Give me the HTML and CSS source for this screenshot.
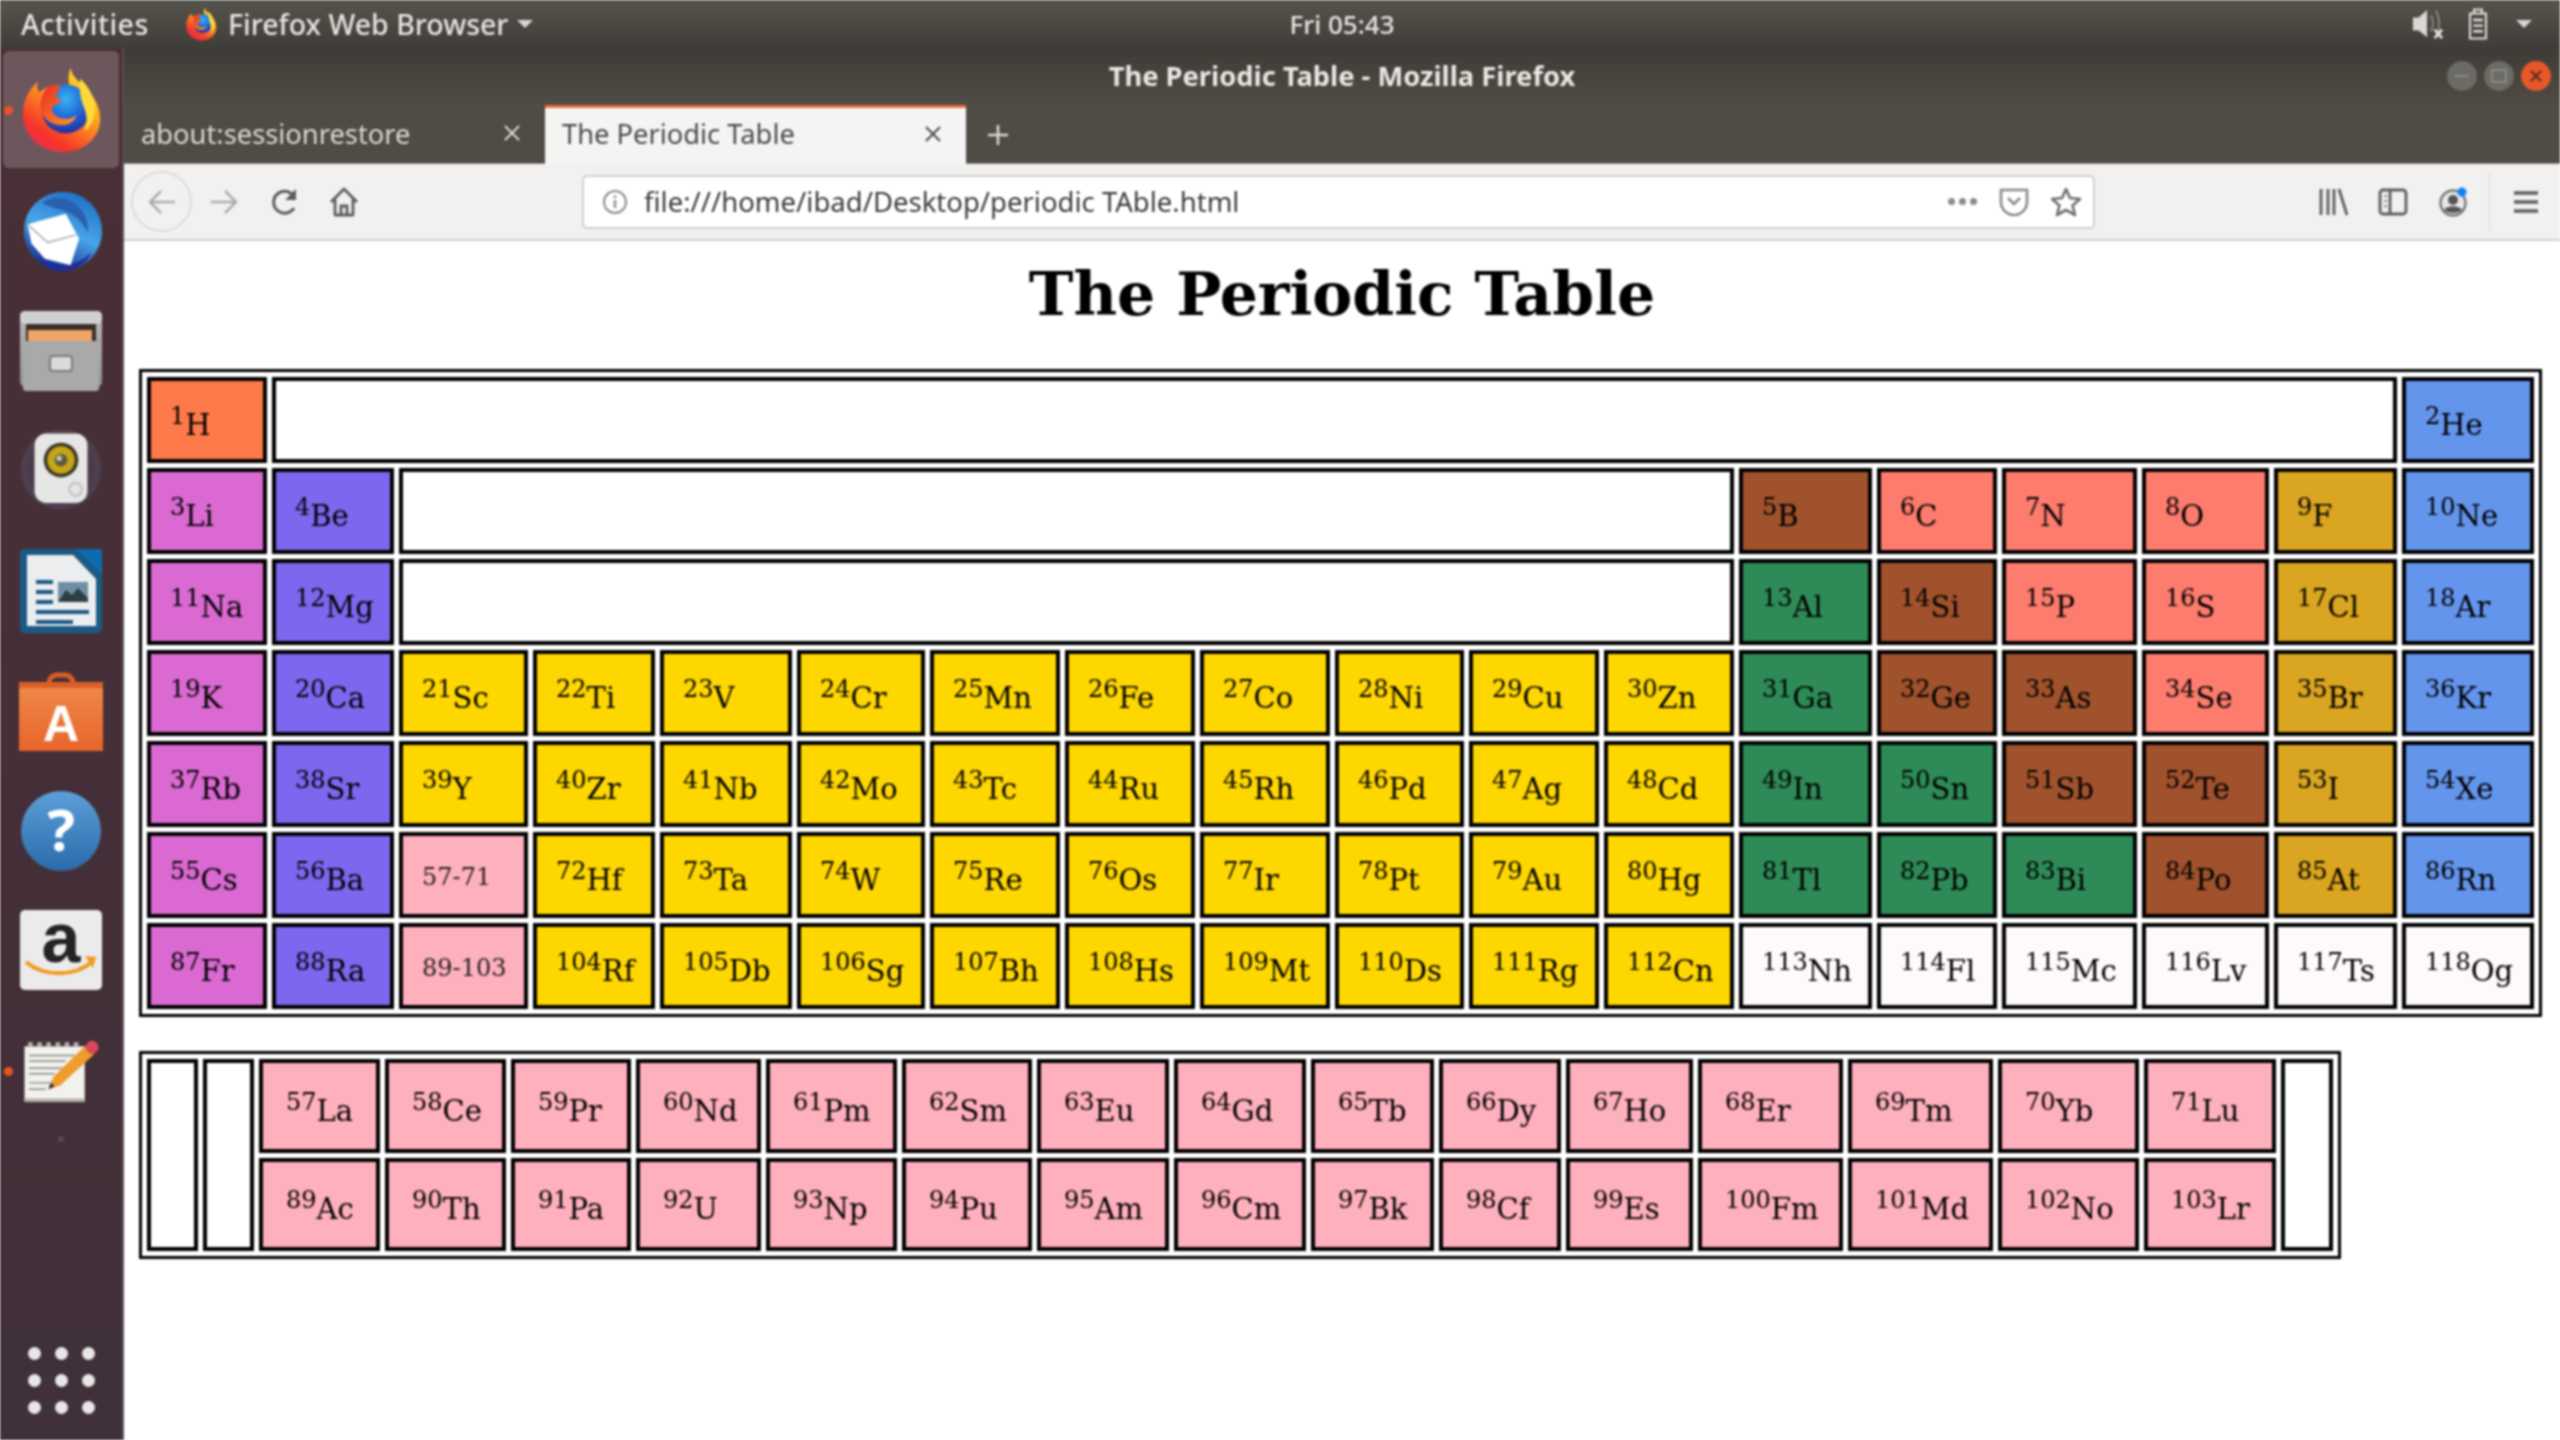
FILE: index.html
```html
<!DOCTYPE html>
<html lang="en">
<head>
<meta charset="utf-8">
<title>The Periodic Table</title>
<link rel="stylesheet" href="styles.css">
</head>
<body>
<svg class="defs" width="0" height="0" aria-hidden="true">
  <defs>
    <linearGradient id="ffFlame" x1="0.85" y1="0" x2="0.2" y2="1">
      <stop offset="0" stop-color="#ffe62b"/><stop offset="0.4" stop-color="#ffa21d"/><stop offset="0.8" stop-color="#f6352a"/><stop offset="1" stop-color="#ee2a55"/>
    </linearGradient>
    <linearGradient id="ffFox" x1="0" y1="0" x2="1" y2="1">
      <stop offset="0" stop-color="#e9282c"/><stop offset="1" stop-color="#ff9a1c"/>
    </linearGradient>
    <radialGradient id="ffGlobe" cx="0.5" cy="0.3" r="0.8">
      <stop offset="0" stop-color="#35b4f0"/><stop offset="0.5" stop-color="#1f62d8"/><stop offset="1" stop-color="#2a1d8c"/>
    </radialGradient>
    <symbol id="firefox" viewBox="0 0 84 88">
      <path fill="url(#ffFlame)" d="M52 1c1 9 8 13 15 20 11 11 16 23 15 35-2 19-19 31-38 31C22 87 3 71 3 48 3 36 8 24 18 15c-1 5 0 9 2 11 5-5 11-7 18-7 5 0 10 1 14 4C49 16 49 8 52 1z"/>
      <circle cx="47" cy="43" r="25" fill="url(#ffGlobe)"/>
      <path fill="url(#ffFox)" d="M30 19c5-2 9 0 12 3-3 3-6 6-5 9l6 3c-2 3-6 3-9 6-3 4 0 9 6 12 6 2 13 1 18-3-2 8-11 12-20 10-11-2-18-11-17-21 1-8 4-15 9-19z"/>
      <path fill="#ffd83a" d="M62 12c9 9 16 21 15 34-1 9-5 15-11 20 3-8 3-17-1-26-3-8-5-18-3-28z"/>
    </symbol>
    <linearGradient id="tbBlue" x1="0.7" y1="0" x2="0.3" y2="1">
      <stop offset="0" stop-color="#1d6fc4"/><stop offset="0.5" stop-color="#49a4e8"/><stop offset="1" stop-color="#152a8a"/>
    </linearGradient>
    <linearGradient id="drawer" x1="0" y1="0" x2="0" y2="1">
      <stop offset="0" stop-color="#b9b9b9"/><stop offset="1" stop-color="#8f8f8f"/>
    </linearGradient>
    <linearGradient id="bag" x1="0" y1="0" x2="0" y2="1">
      <stop offset="0" stop-color="#f08a4c"/><stop offset="1" stop-color="#e8652a"/>
    </linearGradient>
    <linearGradient id="help" x1="0" y1="0" x2="0" y2="1">
      <stop offset="0" stop-color="#5c9fd8"/><stop offset="1" stop-color="#2a6bab"/>
    </linearGradient>
  </defs>
</svg>
<div class="screen">
  <header class="topbar">
    <div class="topbar-left">
      <span class="activities">Activities</span>
      <svg class="app-icon"><use href="#firefox"/></svg>
      <span class="app-name">Firefox Web Browser</span>
      <span class="arrow"></span>
    </div>
    <div class="clock">Fri 05:43</div>
    <div class="tray">
      <svg class="tray-sound" viewBox="0 0 34 40">
        <path fill="#d8d7d3" d="M1 13h6l9-8v29l-9-7H1z"/>
        <path fill="none" stroke="#8c8a84" stroke-width="2" d="M20 11c3 5 3 12 0 17M25 6c5 7 5 20 0 28"/>
        <path fill="none" stroke="#e4e3df" stroke-width="3" d="M24 26l8 9m0-9l-8 9"/>
      </svg>
      <svg class="tray-batt" viewBox="0 0 24 40">
        <path fill="none" stroke="#e2e1dd" stroke-width="2.5" d="M2 7h20v31H2zM7 7V2h10v5"/>
        <path stroke="#e2e1dd" stroke-width="3" d="M6 15h12M6 22h12M6 29h12"/>
      </svg>
      <span class="arrow arrow-tray"></span>
    </div>
  </header>
  <div class="desktop">
    <nav class="dock">
      <div class="dock-item is-active"><span class="pip"></span><svg class="dock-icon ff"><use href="#firefox"/></svg></div>
      <div class="dock-item">
        <svg class="dock-icon" viewBox="0 0 88 84">
          <circle cx="46" cy="42" r="41" fill="url(#tbBlue)"/>
          <path fill="#1b2f9a" d="M20 68c14 12 40 14 56-4-6 14-20 20-32 20s-20-6-24-16z"/>
          <path fill="#2a5fb0" d="M24 12c12-8 28-6 38 4 8 8 11 18 10 28-4-10-12-18-22-22-9-4-18-4-26-10z"/>
          <path fill="#fff" d="M9 35l40-11 14 26-9 28-27-7-14-16z"/>
          <path fill="none" stroke="#9aa6b5" stroke-width="1.5" d="M10 36l20 18 30-8"/>
        </svg>
      </div>
      <div class="dock-item">
        <svg class="dock-icon" viewBox="0 0 84 84">
          <rect x="1" y="2" width="82" height="76" rx="5" fill="url(#drawer)"/>
          <rect x="1" y="2" width="82" height="13" rx="5" fill="#d0d0d0"/>
          <rect x="7" y="15" width="70" height="17" fill="#3a2d28"/>
          <rect x="9" y="21" width="64" height="11" fill="#eda467"/>
          <path fill="#a9a9a9" d="M4 32h76v47a3 3 0 0 1-3 3H7a3 3 0 0 1-3-3z"/>
          <rect x="31" y="47" width="22" height="15" rx="3" fill="#dadada" stroke="#7b7b7b" stroke-width="2"/>
        </svg>
      </div>
      <div class="dock-item">
        <svg class="dock-icon" viewBox="0 0 92 84">
          <circle cx="46" cy="40" r="44" fill="#4d3f4f"/>
          <circle cx="46" cy="40" r="36" fill="#4b3a47"/>
          <rect x="17" y="1" width="58" height="76" rx="13" fill="#e6e6e4"/>
          <circle cx="46" cy="30" r="19" fill="#3d3a2a"/>
          <circle cx="46" cy="30" r="15" fill="#c4a517"/>
          <circle cx="46" cy="30" r="7" fill="#5e5a3e"/>
          <circle cx="44" cy="28" r="3" fill="#c7c7c0"/>
          <circle cx="62" cy="62" r="7" fill="none" stroke="#c8c8c8" stroke-width="3"/>
        </svg>
      </div>
      <div class="dock-item">
        <svg class="dock-icon" viewBox="0 0 84 84">
          <rect x="1" y="0" width="82" height="84" rx="5" fill="#1b5a87"/>
          <path fill="#0c6cb0" d="M58 0h22a3 3 0 0 1 3 3v22z"/>
          <path fill="#ecedee" d="M8 6h46l23 24v47H8z"/>
          <path stroke="#1b5a87" stroke-width="4" d="M17 33h17M17 43h17M17 53h17M17 63h53M17 73h37"/>
          <rect x="39" y="33" width="30" height="20" fill="#6f8fa6"/>
          <path fill="#2f3e46" d="M39 53l8-12 6 5 6-7 10 10v4z"/>
        </svg>
      </div>
      <div class="dock-item">
        <svg class="dock-icon" viewBox="0 0 84 84">
          <path fill="none" stroke="#d85e26" stroke-width="5" d="M30 24v-10a8 8 0 0 1 8-8h8a8 8 0 0 1 8 8v10"/>
          <path fill="url(#bag)" d="M0 13h84v69H0z"/>
          <path fill="#d9602a" d="M0 13h84v6H0z"/>
          <text class="bag-letter" x="42" y="72" text-anchor="middle">A</text>
        </svg>
      </div>
      <div class="dock-item">
        <svg class="dock-icon" viewBox="0 0 84 84">
          <circle cx="42" cy="42" r="40" fill="url(#help)"/>
          <text class="help-mark" x="42" y="62" text-anchor="middle">?</text>
        </svg>
      </div>
      <div class="dock-item">
        <svg class="dock-icon" viewBox="0 0 84 84">
          <rect x="1" y="1" width="82" height="80" rx="5" fill="#ebebeb"/>
          <text class="amazon-a" x="42" y="53" text-anchor="middle">a</text>
          <path fill="none" stroke="#f09a1e" stroke-width="4" d="M7 53c18 15 48 15 66 0"/>
          <path fill="#f09a1e" d="M66 47l11 1-3 11z"/>
        </svg>
      </div>
      <div class="dock-item">
        <span class="pip"></span>
        <svg class="dock-icon" viewBox="0 0 92 70">
          <rect x="6" y="8" width="66" height="60" fill="#f1f1ee"/>
          <rect x="6" y="65" width="66" height="4" fill="#b4b4b0"/>
          <path stroke="#b5b5b0" stroke-width="5" stroke-dasharray="5 5" d="M10 6h60"/>
          <path stroke="#87867f" stroke-width="1.5" d="M11 18h50M11 24h40M11 32h42M11 38h28M11 48h28M11 55h18"/>
          <path fill="#ee9c2c" d="M72 8l10 9-37 34-13 4 6-14z"/>
          <path fill="#2b2623" d="M32 55l3-7 4 4z"/>
          <circle cx="80" cy="9" r="7" fill="#d8485a"/>
        </svg>
      </div>
      <span class="dock-faint"></span>
      <div class="apps-grid">
        <span></span><span></span><span></span><span></span><span></span><span></span><span></span><span></span><span></span>
      </div>
    </nav>
    <div class="window">
      <div class="titlebar">
        <div class="title">The Periodic Table - Mozilla Firefox</div>
        <div class="winbtns">
          <span class="winbtn"><svg viewBox="0 0 30 30"><path stroke="#8a8a86" stroke-width="2" d="M8 15h14"/></svg></span>
          <span class="winbtn"><svg viewBox="0 0 30 30"><rect x="8" y="9" width="14" height="12" fill="none" stroke="#8a8a86" stroke-width="2"/></svg></span>
          <span class="winbtn is-close"><svg viewBox="0 0 30 30"><path stroke="#5b2a18" stroke-width="2" d="M10 10l10 10m0-10L10 20"/></svg></span>
        </div>
      </div>
      <div class="tabstrip">
        <div class="tab">
          <span class="tab-label">about:sessionrestore</span>
          <svg class="tab-close" viewBox="0 0 20 20"><path stroke="currentColor" stroke-width="2" d="M3 3l14 14m0-14L3 17"/></svg>
        </div>
        <div class="tab is-current">
          <span class="tab-label">The Periodic Table</span>
          <svg class="tab-close" viewBox="0 0 20 20"><path stroke="currentColor" stroke-width="2" d="M3 3l14 14m0-14L3 17"/></svg>
        </div>
        <svg class="tab-new" viewBox="0 0 24 24"><path stroke="#dcdbd6" stroke-width="2.5" d="M12 2v20M2 12h20"/></svg>
      </div>
      <div class="toolbar">
        <span class="back-btn">
          <svg class="tb-icon" viewBox="0 0 30 30"><path fill="none" stroke="#aeaeae" stroke-width="2.6" d="M28 15H4M14 4L3 15l11 11"/></svg>
        </span>
        <svg class="tb-icon tb-forward" viewBox="0 0 30 30"><path fill="none" stroke="#aeaeae" stroke-width="2.6" d="M2 15h24M16 4l11 11-11 11"/></svg>
        <svg class="tb-icon tb-reload" viewBox="0 0 30 30"><path fill="none" stroke="#5d5d5d" stroke-width="3" d="M24 21a11 11 0 1 1-1-13"/><path fill="#5d5d5d" d="M26 2v11H15z"/></svg>
        <svg class="tb-icon tb-home" viewBox="0 0 30 30"><path fill="none" stroke="#5d5d5d" stroke-width="2.8" stroke-linejoin="round" d="M2 15L15 2l13 13M6 12v16h18V12M12 28v-9h6v9"/></svg>
        <div class="urlbar">
          <svg class="url-info" viewBox="0 0 26 26"><circle cx="13" cy="13" r="11" fill="none" stroke="#8d8d8d" stroke-width="2"/><path stroke="#8d8d8d" stroke-width="2.4" d="M13 11v8M13 6.500v2.500"/></svg>
          <span class="url-text">file:///home/ibad/Desktop/periodic TAble.html</span>
          <span class="url-dots"><i></i><i></i><i></i></span>
          <svg class="tb-icon url-pocket" viewBox="0 0 30 30"><path fill="none" stroke="#8a8a8a" stroke-width="2.6" d="M2 3h26v12a13 13 0 0 1-26 0z"/><path fill="none" stroke="#8a8a8a" stroke-width="2.6" d="M9 11l6 6 6-6"/></svg>
          <svg class="tb-icon url-star" viewBox="0 0 30 30"><path fill="none" stroke="#707070" stroke-width="2.6" stroke-linejoin="round" d="M15 2l4 9 10 1-7.500 6.500L24 28l-9-5-9 5 2.500-9.500L1 12l10-1z"/></svg>
        </div>
        <div class="tb-right">
          <svg class="tb-icon" viewBox="0 0 30 30"><path fill="none" stroke="#5d5d5d" stroke-width="2.8" d="M3 2v26M10 2v26M16 2v26M21 2l8 26"/></svg>
          <svg class="tb-icon" viewBox="0 0 30 30"><rect x="2" y="3" width="26" height="24" rx="3" fill="none" stroke="#5d5d5d" stroke-width="2.8"/><path stroke="#5d5d5d" stroke-width="2.8" d="M12 3v24"/><path stroke="#8d8d8d" stroke-width="2" d="M6 9h3M6 14h3M6 19h3"/></svg>
          <svg class="tb-icon" viewBox="0 0 30 30"><circle cx="15" cy="16" r="12.500" fill="#e8e8e8" stroke="#777" stroke-width="2.4"/><circle cx="15" cy="13" r="5" fill="#555"/><path fill="#555" d="M6 23c3-5 15-5 18 0-4 4-14 4-18 0z"/><circle cx="24" cy="5" r="4.500" fill="#0a84ff"/></svg>
          <span class="tb-sep"></span>
          <svg class="tb-icon" viewBox="0 0 30 30"><path stroke="#5d5d5d" stroke-width="3.400" d="M3 6h24M3 15h24M3 24h24"/></svg>
        </div>
      </div>
      <main class="page">
        <h1 class="page-title">The Periodic Table</h1>
        <table class="ptable ptable-main">
          <colgroup><col><col><col><col><col><col><col><col><col><col><col><col><col><col><col><col><col><col></colgroup>
          <tbody>
            <tr><td class="h"><sup>1</sup>H</td><td colspan="16" class="blank"></td><td class="ng"><sup>2</sup>He</td></tr>
            <tr><td class="am"><sup>3</sup>Li</td><td class="ae"><sup>4</sup>Be</td><td colspan="10" class="blank"></td><td class="md"><sup>5</sup>B</td><td class="nm"><sup>6</sup>C</td><td class="nm"><sup>7</sup>N</td><td class="nm"><sup>8</sup>O</td><td class="hl"><sup>9</sup>F</td><td class="ng"><sup>10</sup>Ne</td></tr>
            <tr><td class="am"><sup>11</sup>Na</td><td class="ae"><sup>12</sup>Mg</td><td colspan="10" class="blank"></td><td class="pt"><sup>13</sup>Al</td><td class="md"><sup>14</sup>Si</td><td class="nm"><sup>15</sup>P</td><td class="nm"><sup>16</sup>S</td><td class="hl"><sup>17</sup>Cl</td><td class="ng"><sup>18</sup>Ar</td></tr>
            <tr><td class="am"><sup>19</sup>K</td><td class="ae"><sup>20</sup>Ca</td><td class="tm"><sup>21</sup>Sc</td><td class="tm"><sup>22</sup>Ti</td><td class="tm"><sup>23</sup>V</td><td class="tm"><sup>24</sup>Cr</td><td class="tm"><sup>25</sup>Mn</td><td class="tm"><sup>26</sup>Fe</td><td class="tm"><sup>27</sup>Co</td><td class="tm"><sup>28</sup>Ni</td><td class="tm"><sup>29</sup>Cu</td><td class="tm"><sup>30</sup>Zn</td><td class="pt"><sup>31</sup>Ga</td><td class="md"><sup>32</sup>Ge</td><td class="md"><sup>33</sup>As</td><td class="nm"><sup>34</sup>Se</td><td class="hl"><sup>35</sup>Br</td><td class="ng"><sup>36</sup>Kr</td></tr>
            <tr><td class="am"><sup>37</sup>Rb</td><td class="ae"><sup>38</sup>Sr</td><td class="tm"><sup>39</sup>Y</td><td class="tm"><sup>40</sup>Zr</td><td class="tm"><sup>41</sup>Nb</td><td class="tm"><sup>42</sup>Mo</td><td class="tm"><sup>43</sup>Tc</td><td class="tm"><sup>44</sup>Ru</td><td class="tm"><sup>45</sup>Rh</td><td class="tm"><sup>46</sup>Pd</td><td class="tm"><sup>47</sup>Ag</td><td class="tm"><sup>48</sup>Cd</td><td class="pt"><sup>49</sup>In</td><td class="pt"><sup>50</sup>Sn</td><td class="md"><sup>51</sup>Sb</td><td class="md"><sup>52</sup>Te</td><td class="hl"><sup>53</sup>I</td><td class="ng"><sup>54</sup>Xe</td></tr>
            <tr><td class="am"><sup>55</sup>Cs</td><td class="ae"><sup>56</sup>Ba</td><td class="ln range">57-71</td><td class="tm"><sup>72</sup>Hf</td><td class="tm"><sup>73</sup>Ta</td><td class="tm"><sup>74</sup>W</td><td class="tm"><sup>75</sup>Re</td><td class="tm"><sup>76</sup>Os</td><td class="tm"><sup>77</sup>Ir</td><td class="tm"><sup>78</sup>Pt</td><td class="tm"><sup>79</sup>Au</td><td class="tm"><sup>80</sup>Hg</td><td class="pt"><sup>81</sup>Tl</td><td class="pt"><sup>82</sup>Pb</td><td class="pt"><sup>83</sup>Bi</td><td class="md"><sup>84</sup>Po</td><td class="hl"><sup>85</sup>At</td><td class="ng"><sup>86</sup>Rn</td></tr>
            <tr><td class="am"><sup>87</sup>Fr</td><td class="ae"><sup>88</sup>Ra</td><td class="ln range">89-103</td><td class="tm"><sup>104</sup>Rf</td><td class="tm"><sup>105</sup>Db</td><td class="tm"><sup>106</sup>Sg</td><td class="tm"><sup>107</sup>Bh</td><td class="tm"><sup>108</sup>Hs</td><td class="tm"><sup>109</sup>Mt</td><td class="tm"><sup>110</sup>Ds</td><td class="tm"><sup>111</sup>Rg</td><td class="tm"><sup>112</sup>Cn</td><td class="un"><sup>113</sup>Nh</td><td class="un"><sup>114</sup>Fl</td><td class="un"><sup>115</sup>Mc</td><td class="un"><sup>116</sup>Lv</td><td class="un"><sup>117</sup>Ts</td><td class="un"><sup>118</sup>Og</td></tr>
          </tbody>
        </table>
        <table class="ptable ptable-series">
          <colgroup><col><col><col><col><col><col><col><col><col><col><col><col><col><col><col><col><col><col></colgroup>
          <tbody>
            <tr><td rowspan="2" class="blank"></td><td rowspan="2" class="blank"></td><td class="ln"><sup>57</sup>La</td><td class="ln"><sup>58</sup>Ce</td><td class="ln"><sup>59</sup>Pr</td><td class="ln"><sup>60</sup>Nd</td><td class="ln"><sup>61</sup>Pm</td><td class="ln"><sup>62</sup>Sm</td><td class="ln"><sup>63</sup>Eu</td><td class="ln"><sup>64</sup>Gd</td><td class="ln"><sup>65</sup>Tb</td><td class="ln"><sup>66</sup>Dy</td><td class="ln"><sup>67</sup>Ho</td><td class="ln"><sup>68</sup>Er</td><td class="ln"><sup>69</sup>Tm</td><td class="ln"><sup>70</sup>Yb</td><td class="ln"><sup>71</sup>Lu</td><td rowspan="2" class="blank"></td></tr>
            <tr><td class="ln"><sup>89</sup>Ac</td><td class="ln"><sup>90</sup>Th</td><td class="ln"><sup>91</sup>Pa</td><td class="ln"><sup>92</sup>U</td><td class="ln"><sup>93</sup>Np</td><td class="ln"><sup>94</sup>Pu</td><td class="ln"><sup>95</sup>Am</td><td class="ln"><sup>96</sup>Cm</td><td class="ln"><sup>97</sup>Bk</td><td class="ln"><sup>98</sup>Cf</td><td class="ln"><sup>99</sup>Es</td><td class="ln"><sup>100</sup>Fm</td><td class="ln"><sup>101</sup>Md</td><td class="ln"><sup>102</sup>No</td><td class="ln"><sup>103</sup>Lr</td></tr>
          </tbody>
        </table>
      </main>
    </div>
  </div>
</div>
</body>
</html>
```

FILE: styles.css
```css
* { box-sizing: border-box; }
html, body { margin: 0; padding: 0; background: #fff; }
.defs { position: absolute; }
.screen {
  width: 2560px;
  height: 1440px;
  overflow: hidden;
  display: flex;
  flex-direction: column;
  font-family: "Noto Sans", "Liberation Sans", sans-serif;
  filter: blur(0.9px);
}

/* top panel */
.topbar {
  height: 48px;
  flex: none;
  display: grid;
  grid-template-columns: 1fr auto 1fr;
  align-items: center;
  background: linear-gradient(#57534d, #403d38);
  color: #e6e5e1;
  font-size: 28.500px;
  font-weight: 500;
}
.topbar-left { display: flex; align-items: center; padding-left: 21px; }
.activities { width: 164px; letter-spacing: 0.5px; }
.app-icon { width: 32px; height: 34px; margin-right: 11px; }
.app-name { white-space: nowrap; }
.arrow {
  width: 0; height: 0;
  border-left: 8px solid transparent;
  border-right: 8px solid transparent;
  border-top: 8px solid #d8d7d3;
  margin-left: 9px;
}
.clock { text-align: center; font-size: 26px; margin-left: 124px; }
.tray { display: flex; align-items: center; justify-content: flex-end; padding-right: 28px; }
.tray-sound { width: 32px; height: 38px; margin-right: 22px; }
.tray-batt { width: 24px; height: 32px; margin-right: 26px; }
.arrow-tray { margin-left: 0; }

.desktop { flex: 1; display: flex; min-height: 0; }

/* dock */
.dock {
  width: 124px;
  flex: none;
  display: flex;
  flex-direction: column;
  align-items: center;
  padding-top: 3px;
  padding-bottom: 26px;
  background: linear-gradient(#4a2f36, #40303a);
  border-right: 2px solid #5a4d52;
  position: relative;
}
.dock-item {
  width: 116px;
  height: 120px;
  flex: none;
  display: flex;
  align-items: center;
  justify-content: center;
  position: relative;
}
.dock-item.is-active { background: #6e575c; border-radius: 6px; height: 117px; margin-bottom: 3px; }
.dock-icon { width: 84px; height: 84px; overflow: visible; }
.dock-icon.ff { width: 82px; height: 86px; }
.pip {
  position: absolute;
  left: 1px;
  top: 50%;
  width: 9px;
  height: 9px;
  margin-top: -4px;
  border-radius: 50%;
  background: #e95420;
}
.dock-faint { width: 6px; height: 6px; border-radius: 50%; background: #574950; margin-top: 5px; }
.apps-grid {
  margin-top: auto;
  display: grid;
  grid-template-columns: repeat(3, 13px);
  gap: 14px;
}
.apps-grid span { width: 13px; height: 13px; border-radius: 50%; background: #e8e6e6; }
.bag-letter { font: 700 50px "Liberation Sans", sans-serif; fill: #fff; }
.help-mark { font: 700 58px "Noto Sans", sans-serif; fill: #fff; }
.amazon-a { font: 700 70px "Liberation Sans", sans-serif; fill: #232323; }

/* window */
.window { flex: 1; min-width: 0; display: flex; flex-direction: column; }
.titlebar {
  height: 57px;
  flex: none;
  background: linear-gradient(#3f3c37, #4f4c45);
  display: flex;
  align-items: center;
  justify-content: center;
  position: relative;
  color: #e9e8e4;
  font-size: 27.300px;
  font-weight: 700;
}
.title { margin-top: -2px; }
.winbtns { position: absolute; right: 9px; top: 13px; display: flex; gap: 7px; }
.winbtn { width: 30px; height: 30px; border-radius: 50%; background: #6b6a65; display: block; }
.winbtn svg { display: block; width: 30px; height: 30px; }
.winbtn.is-close { background: #e4582a; }
.tabstrip {
  height: 59px;
  flex: none;
  background: #4f4c45;
  display: flex;
  align-items: stretch;
  border-bottom: 1px solid #8a8985;
}
.tab {
  width: 421px;
  flex: none;
  display: flex;
  align-items: center;
  justify-content: space-between;
  padding: 0 23px 2px 17px;
  color: #d9d8d3;
  font-size: 27.300px;
}
.tab.is-current {
  background: #f4f4f3;
  color: #4a4a48;
  border-top: 3px solid #e8703f;
  padding-right: 23px;
  padding-bottom: 5px;
  margin-bottom: -1px;
}
.tab-close { width: 20px; height: 20px; }
.tab-new { width: 24px; height: 24px; margin: 18px 0 0 20px; }
.toolbar {
  height: 77px;
  flex: none;
  background: #f2f1f0;
  border-bottom: 2px solid #cfcfcd;
  display: flex;
  align-items: center;
  padding-left: 7px;
}
.tb-icon { width: 30px; height: 30px; flex: none; }
.back-btn {
  width: 61px;
  height: 61px;
  border: 2px solid #dcdcdb;
  border-radius: 50%;
  display: flex;
  align-items: center;
  justify-content: center;
  flex: none;
}
.tb-forward { margin-left: 17px; }
.tb-reload { margin-left: 31px; }
.tb-home { margin-left: 29px; }
.urlbar {
  width: 1513px;
  height: 54px;
  flex: none;
  margin-left: 223px;
  background: #fff;
  border: 2px solid #cfcfcd;
  border-radius: 5px;
  display: flex;
  align-items: center;
  padding: 0 12px 0 18px;
  color: #3c3c3c;
  font-size: 27.500px;
}
.url-info { width: 26px; height: 26px; flex: none; }
.url-text { margin-left: 16px; white-space: nowrap; flex: 1; }
.url-dots { display: flex; gap: 4px; }
.url-dots i { width: 7px; height: 7px; border-radius: 50%; background: #8a8a8a; }
.url-pocket { margin-left: 22px; }
.url-star { margin-left: 22px; }
.tb-right { display: flex; align-items: center; flex: none; margin-left: 223px; gap: 30px; }
.tb-sep { width: 1px; height: 60px; background: #dedddc; margin: 0 -9px 0 -9px; }

/* page */
.page { flex: 1; background: #fff; padding-left: 15px; min-height: 0; }
.page-title {
  margin: 0 0 21px -15px;
  height: 107px;
  line-height: 107px;
  text-align: center;
  font-family: "DejaVu Serif", serif;
  font-weight: 700;
  font-size: 60px;
  color: #000;
}
.ptable {
  table-layout: fixed;
  border-collapse: separate;
  border-spacing: 5px;
  border: 3px solid #000;
  font-family: "DejaVu Serif", serif;
  font-size: 29px;
  color: #000;
}
.ptable td {
  border: 4px solid #000;
  padding: 4px 0 0 19px;
  vertical-align: middle;
  line-height: 1.2;
  white-space: nowrap;
  overflow: hidden;
}
.ptable sup { font-size: 24px; }
.ptable-main { width: 2403px; margin-bottom: 34px; }
.ptable-main tr { height: 86px; }
.ptable-main col:nth-child(1) { width: 120px; }
.ptable-main col:nth-child(2) { width: 122px; }
.ptable-main col:nth-child(3) { width: 129px; }
.ptable-main col:nth-child(4) { width: 122px; }
.ptable-main col:nth-child(5) { width: 132px; }
.ptable-main col:nth-child(6) { width: 128px; }
.ptable-main col:nth-child(7) { width: 130px; }
.ptable-main col:nth-child(8) { width: 130px; }
.ptable-main col:nth-child(9) { width: 130px; }
.ptable-main col:nth-child(10) { width: 129px; }
.ptable-main col:nth-child(11) { width: 130px; }
.ptable-main col:nth-child(12) { width: 130px; }
.ptable-main col:nth-child(13) { width: 133px; }
.ptable-main col:nth-child(14) { width: 120px; }
.ptable-main col:nth-child(15) { width: 135px; }
.ptable-main col:nth-child(16) { width: 127px; }
.ptable-main col:nth-child(17) { width: 123px; }
.ptable-main col:nth-child(18) { width: 132px; }
.ptable-series { width: 2202px; }
.ptable-series tr { height: 93.500px; }
.ptable-series td { padding-left: 23px; }
.ptable-series col:nth-child(1) { width: 51px; }
.ptable-series col:nth-child(2) { width: 51px; }
.ptable-series col:nth-child(3) { width: 121px; }
.ptable-series col:nth-child(4) { width: 121px; }
.ptable-series col:nth-child(5) { width: 120px; }
.ptable-series col:nth-child(6) { width: 125px; }
.ptable-series col:nth-child(7) { width: 131px; }
.ptable-series col:nth-child(8) { width: 130px; }
.ptable-series col:nth-child(9) { width: 132px; }
.ptable-series col:nth-child(10) { width: 132px; }
.ptable-series col:nth-child(11) { width: 123px; }
.ptable-series col:nth-child(12) { width: 122px; }
.ptable-series col:nth-child(13) { width: 127px; }
.ptable-series col:nth-child(14) { width: 145px; }
.ptable-series col:nth-child(15) { width: 145px; }
.ptable-series col:nth-child(16) { width: 141px; }
.ptable-series col:nth-child(17) { width: 132px; }
.ptable-series col:nth-child(18) { width: 52px; }
.ptable td.range { font-size: 24px; color: #222; }
.blank { background: #fff; }
.h { background: #ff7a4a; }
.am { background: #da6ad2; }
.ae { background: #7b68ee; }
.tm { background: #ffd700; }
.ln { background: #ffb0bd; }
.nm { background: #fd7c6e; }
.md { background: #a0522d; }
.pt { background: #2e8b57; }
.hl { background: #daa520; }
.ng { background: #6495ed; }
.un { background: #fffafa; }
```
